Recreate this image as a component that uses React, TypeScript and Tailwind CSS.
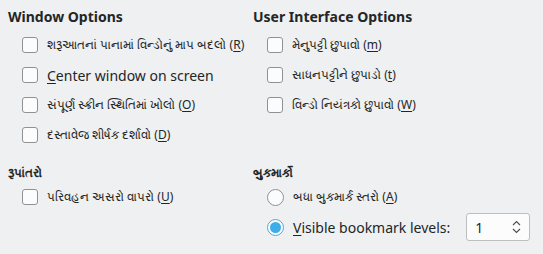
const Mn = ({ children }: { children: string }) => <span className="underline underline-offset-2">{children}</span>;

const Check = ({ children, small = true }: { children: React.ReactNode; small?: boolean }) => (
    <div className="flex h-[30px] items-center pl-[14px]">
        <div className="h-[16px] w-[16px] shrink-0 rounded-[3px] border border-[#8f9193] bg-[#fcfcfc]"></div>
        <span className={`ml-[9px] whitespace-nowrap text-[#232627] ${small ? "text-[12px]" : "text-[14px]"}`}>{children}</span>
    </div>
);

const Heading = ({ children }: { children: React.ReactNode }) => (
    <div className="h-[20px] whitespace-nowrap text-[14px] leading-[20px] font-bold text-[#232627]">{children}</div>
);

const App = () => {
    return (
        <div className="h-[254px] w-[543px] overflow-hidden bg-[#eff0f1] px-2 pt-[7px]" style={{ fontFamily: '"Noto Sans", sans-serif' }}>
            <div className="grid grid-cols-[245px_1fr]">
                <div>
                    <Heading>Window Options</Heading>
                    <div className="mt-[3px]">
                        <Check>શરૂઆતનાં પાનામાં વિન્ડોનું માપ બદલો (<Mn>R</Mn>)</Check>
                        <Check small={false}><Mn>C</Mn>enter window on screen</Check>
                        <Check>સંપૂર્ણ સ્ક્રીન સ્થિતિમાં ખોલો (<Mn>O</Mn>)</Check>
                        <Check>દસ્તાવેજ શીર્ષક દર્શાવો (<Mn>D</Mn>)</Check>
                    </div>
                </div>
                <div>
                    <Heading>User Interface Options</Heading>
                    <div className="mt-[3px]">
                        <Check>મેનુપટ્ટી છુપાવો (<Mn>m</Mn>)</Check>
                        <Check>સાધનપટ્ટીને છુપાડો (<Mn>t</Mn>)</Check>
                        <Check>વિન્ડો નિયંત્રકો છુપાવો (<Mn>W</Mn>)</Check>
                    </div>
                </div>
            </div>
            <div className="mt-[12px] grid grid-cols-[245px_1fr]">
                <div>
                    <Heading><span className="text-[12px]">રૂપાંતરો</span></Heading>
                    <Check>પરિવહન અસરો વાપરો (<Mn>U</Mn>)</Check>
                </div>
                <div>
                    <Heading><span className="text-[12px]">બુકમાર્કો</span></Heading>
                    <div className="flex h-[30px] items-center pl-[14px]">
                        <div className="h-[17px] w-[17px] shrink-0 rounded-full border border-[#8f9193] bg-[#fcfcfc]"></div>
                        <span className="ml-[9px] whitespace-nowrap text-[12px] text-[#232627]">બધા બુકમાર્ક સ્તરો (<Mn>A</Mn>)</span>
                    </div>
                    <div className="flex h-[30px] items-center pl-[14px]">
                        <div className="flex h-[17px] w-[17px] shrink-0 items-center justify-center rounded-full border border-[#3daee9] bg-[#fcfcfc]">
                            <div className="h-[11px] w-[11px] rounded-full bg-[#3daee9]"></div>
                        </div>
                        <span className="ml-[9px] whitespace-nowrap text-[14px] text-[#232627]"><Mn>V</Mn>isible bookmark levels:</span>
                        <div className="ml-[16px] flex h-[28px] w-[64px] items-center justify-between rounded-[3px] border border-[#bcbebf] bg-[#fcfcfc] pl-[8px] pr-[8px]">
                            <span className="text-[14px] text-[#232627]">1</span>
                            <svg width="9" height="16" viewBox="0 0 9 16" fill="none" stroke="#4d4d4d" strokeWidth="1.1">
                                <path d="M1 6 L4.5 2.5 L8 6" />
                                <path d="M1 10 L4.5 13.5 L8 10" />
                            </svg>
                        </div>
                    </div>
                </div>
            </div>
        </div>
    );
};

export default App;
